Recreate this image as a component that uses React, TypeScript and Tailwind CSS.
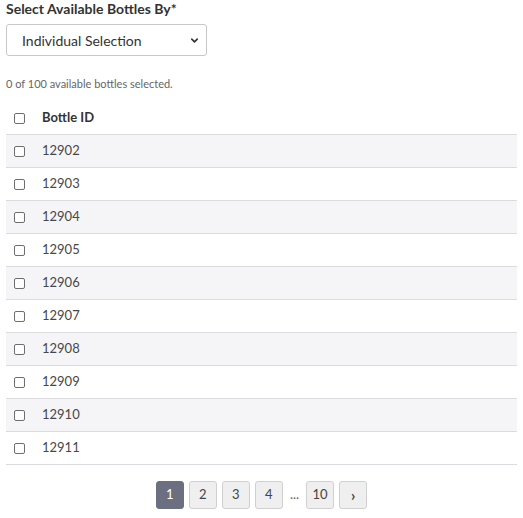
import { useState } from "react";

const BOTTLES = ["12902", "12903", "12904", "12905", "12906", "12907", "12908", "12909", "12910", "12911"];

export default function App() {
  const [selected, setSelected] = useState<string[]>([]);

  const toggle = (id: string) =>
    setSelected((s) => (s.includes(id) ? s.filter((v) => v !== id) : [...s, id]));

  return (
    <div className="px-[6px] font-['Lato','Liberation_Sans',sans-serif] text-[#333]">
      <div className="text-[14px] font-bold leading-[18px]">Select Available Bottles By*</div>

      <div className="relative mt-[6px] w-[201px]">
        <select className="h-[32px] w-full appearance-none rounded-[3px] border border-[#c8c8c8] bg-white pl-[15px] text-[14px] text-[#333] outline-none">
          <option>Individual Selection</option>
          <option>Range</option>
        </select>
        <ChevronDown />
      </div>

      <div className="mt-[21px] text-[11px] leading-[14px] text-[#666]">
        {selected.length} of 100 available bottles selected.
      </div>

      <div className="mt-[11px]">
        <div className="flex h-[33px] items-center border-b border-[#dcdce0] pl-[8px]">
          <Check
            checked={selected.length === BOTTLES.length}
            onChange={() => setSelected(selected.length === BOTTLES.length ? [] : BOTTLES)}
          />
          <span className="ml-[17px] text-[13px] font-bold text-[#333]">Bottle ID</span>
        </div>
        {BOTTLES.map((id, i) => (
          <div
            key={id}
            className={`flex h-[33px] items-center border-b border-[#dcdce0] pl-[8px] ${i % 2 === 0 ? "bg-[#f5f5f7]" : "bg-white"}`}
          >
            <Check checked={selected.includes(id)} onChange={() => toggle(id)} />
            <span className="ml-[17px] text-[13px] text-[#474747]">{id}</span>
          </div>
        ))}
      </div>

      <div className="mt-[16px] flex items-center justify-center gap-[5px] text-[13px]">
        <PageButton active>1</PageButton>
        <PageButton>2</PageButton>
        <PageButton>3</PageButton>
        <PageButton>4</PageButton>
        <span className="px-[2px] text-[#666]">...</span>
        <PageButton>10</PageButton>
        <PageButton>
          <span className="text-[15px] font-bold leading-none">›</span>
        </PageButton>
      </div>
    </div>
  );
}

function Check({ checked, onChange }: { checked: boolean; onChange: () => void }) {
  return (
    <input
      type="checkbox"
      checked={checked}
      onChange={onChange}
      className="h-[11px] w-[11px] shrink-0 appearance-none rounded-[2px] border border-[#6e6e6e] bg-white checked:bg-[#6c6f80]"
    />
  );
}

function PageButton({ children, active = false }: { children: React.ReactNode; active?: boolean }) {
  return (
    <button
      type="button"
      className={`flex h-[28px] w-[28px] items-center justify-center rounded-[3px] border ${
        active ? "border-[#6c6f80] bg-[#6c6f80] text-white" : "border-[#d0d0d0] bg-[#efefef] text-[#444]"
      }`}
    >
      {children}
    </button>
  );
}

function ChevronDown() {
  return (
    <svg
      viewBox="0 0 24 24"
      width="11"
      height="11"
      fill="none"
      stroke="#333"
      strokeWidth="3.5"
      strokeLinecap="round"
      strokeLinejoin="round"
      className="pointer-events-none absolute right-[7px] top-[11px]"
    >
      <path d="m6 9 6 6 6-6" />
    </svg>
  );
}
